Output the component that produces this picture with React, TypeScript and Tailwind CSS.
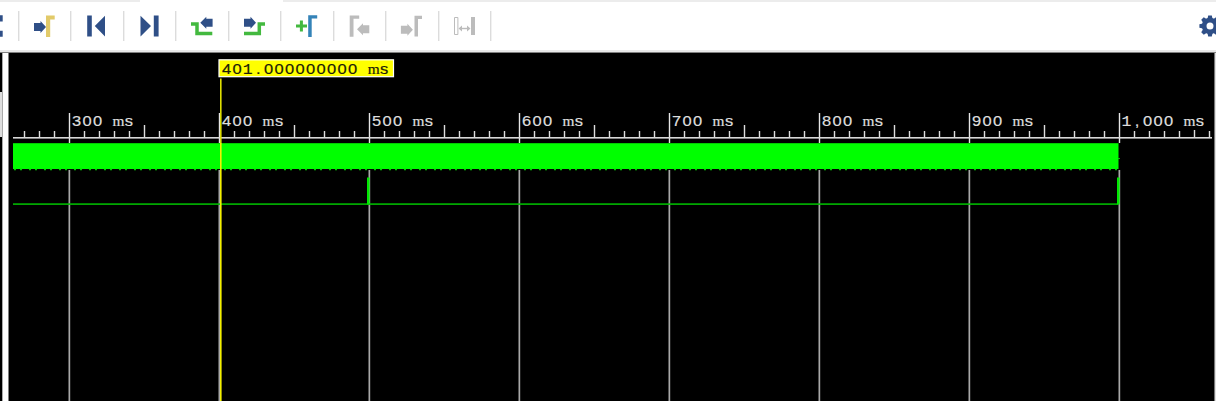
import type { ReactNode } from "react";

const NAVY = "#2f4f87";
const GREEN = "#43b93f";
const GRAY = "#bcbcbc";

const arrowRight = (x: number, y: number) =>
  `M${x} ${y - 4}h6.5v-2l5.5 6l-5.5 6v-2h-6.5z`;
const arrowLeft = (x: number, y: number) =>
  `M${x + 12.3} ${y - 4}h-6.3v-2l-6 6l6 6v-2h6.3z`;

const tools: { name: string; icon: ReactNode }[] = [
  {
    name: "Go to cursor",
    icon: (
      <>
        <path d={arrowRight(16, 27)} fill={NAVY} />
        <path d="M28 15.5h8.7v4h-4.5V37H28z" fill="#e2ca69" />
      </>
    ),
  },
  {
    name: "Go to start",
    icon: <path d="M17.2 15.5h4.6v21h-4.6zM35 15.8v20.7L24.8 26z" fill={NAVY} />,
  },
  {
    name: "Go to end",
    icon: <path d="M17.5 15.8v20.7L28 26zM30.8 15.5h4.8v21h-4.8z" fill={NAVY} />,
  },
  {
    name: "Previous transition",
    icon: (
      <>
        <path d="M16 24h6v9.5h15.3" fill="none" stroke={GREEN} strokeWidth="3.5" />
        <path d={arrowLeft(25.3, 22.7)} fill={NAVY} />
      </>
    ),
  },
  {
    name: "Next transition",
    icon: (
      <>
        <path d="M16 33.5h15.3V24H37" fill="none" stroke={GREEN} strokeWidth="3.5" />
        <path d={arrowRight(16, 22.7)} fill={NAVY} />
      </>
    ),
  },
  {
    name: "Add marker",
    icon: (
      <>
        <path d="M16 26h11M21.4 20.5v11" stroke={GREEN} strokeWidth="3" />
        <path d="M28.2 15.3h9v3.3h-5.5V37h-3.5z" fill="#3483b8" />
      </>
    ),
  },
  {
    name: "Previous marker",
    icon: (
      <>
        <path d="M16.7 15.5h9.5v3.2H20.5V36.8h-3.8z" fill={GRAY} />
        <path d={arrowLeft(24, 29.3)} fill={GRAY} />
      </>
    ),
  },
  {
    name: "Next marker",
    icon: (
      <>
        <path d={arrowRight(15.9, 29.7)} fill={GRAY} />
        <path d="M29.5 15.8h7.5V19H33v17.5h-3.5z" fill={GRAY} />
      </>
    ),
  },
  {
    name: "Swap cursors",
    icon: (
      <>
        <path d="M16.5 17.5h3.4v17h-3.4z" fill="none" stroke={GRAY} />
        <path d="M33 17h4v18h-4z" fill={GRAY} />
        <path d="M22 28.5h9" stroke={GRAY} strokeWidth="1.4" />
        <path d="M20.5 28.5l3.5-3v6zM32.5 28.5l-3.5-3v6z" fill={GRAY} />
      </>
    ),
  },
];

function Toolbar() {
  return (
    <header className="flex h-[50px] w-full shrink-0 overflow-hidden bg-white">
      <svg className="h-[50px] w-[17.5px] shrink-0" viewBox="0 0 17.5 50">
        <path d="M0 15.2h2.7v6.3H0zM0 30.7h2.7v6H0z" fill={NAVY} />
      </svg>
      {tools.map((t) => (
        <button key={t.name} className="h-[50px] w-[52.5px] shrink-0">
          <svg className="h-[50px] w-[52.5px]" viewBox="0 0 52.5 50">
            <path d="M0.7 11v30" stroke="#dcdcdc" strokeWidth="1.4" />
            {t.icon}
          </svg>
        </button>
      ))}
      <svg className="h-[50px] w-[10px] shrink-0" viewBox="0 0 10 50">
        <path d="M0.7 11v30" stroke="#dcdcdc" strokeWidth="1.4" />
      </svg>
      <button className="ml-auto h-[50px] w-[18px] shrink-0">
        <svg className="h-[50px] w-[18px]" viewBox="0 0 18 50">
          <g fill={NAVY} transform="translate(12 26)">
            {[0, 45, 90, 135, 180, 225, 270, 315].map((a) => (
              <path key={a} d="M-2.6 -7L-1.8 -10.6H1.8L2.6 -7z" transform={`rotate(${a})`} />
            ))}
            <path
              fillRule="evenodd"
              d="M0 -8.2a8.2 8.2 0 1 0 0 16.4a8.2 8.2 0 1 0 0 -16.4zM0 -3.5a3.5 3.5 0 1 1 0 7a3.5 3.5 0 1 1 0 -7z"
            />
          </g>
        </svg>
      </button>
    </header>
  );
}

function glyphFont(c: string) {
  if (c === "m") return '"Liberation Serif", serif';
  if (c === "1") return '"Liberation Mono", monospace';
  return '"Liberation Sans", sans-serif';
}

const STRETCH = 1.13;

/* Terminal-style text: every character is centred in a cell of fixed width. */
function CellText({ x, y, fill, children }: { x: number; y: number; fill: string; children: string }) {
  return (
    <text
      y={y}
      fill={fill}
      stroke={fill}
      strokeWidth="0.2"
      fontSize="14.6"
      textAnchor="middle"
      transform={`scale(${STRETCH} 1)`}
    >
      {children.split("").map((c, i) => (
        <tspan
          key={i}
          x={(x + i * 10.5) / STRETCH}
          fontFamily={glyphFont(c)}
          fontSize={c === "m" ? 13.6 : 14.6}
        >
          {c}
        </tspan>
      ))}
    </text>
  );
}

const majors = ["300 ms", "400 ms", "500 ms", "600 ms", "700 ms", "800 ms", "900 ms", "1,000 ms"];
const ticks = Array.from({ length: 80 }, (_, i) => i).filter((i) => i % 10 !== 3);

/* The drawing's origin is the panel's top left corner, at (9, 53) in the window. */
function Waveform() {
  return (
    <svg className="block h-[348px] w-[1205px] shrink-0 bg-black" viewBox="9 53 1205 348">
      {majors.map((label, i) => {
        const x = 69 + i * 150;
        return (
          <g key={label}>
            <rect x={x - 0.2} y="113" width="1.4" height="30" fill="#e6e6e6" />
            <rect x={x - 0.5} y="170" width="1.7" height="231" fill="#a8a8a8" />
            <CellText x={x + 7.5} y={126.2} fill="#dedede">
              {label}
            </CellText>
          </g>
        );
      })}
      {ticks.map((i) => {
        const x = 24 + i * 15;
        const mid = i % 10 === 8;
        const top = mid ? (x > 1190 ? 130 : 125) : 131;
        return <rect key={i} x={x - 0.2} y={top} width="1.4" height={138 - top} fill="#dedede" />;
      })}
      <rect x="13" y="137" width="1199" height="1.6" fill="#d8d8d8" />

      <rect x="13" y="143.2" width="1105.5" height="25.8" fill="#00ff00" />
      <path d="M14 169.5H1118" stroke="#00d000" strokeWidth="1.4" strokeDasharray="2 4 2 7" />
      <rect x="1118" y="158" width="2" height="1" fill="#00c800" />

      <rect x="13" y="203.3" width="1105" height="1.6" fill="#00b800" />
      <rect x="367" y="177.5" width="2.6" height="27" fill="#00e800" />
      <rect x="1117" y="177.5" width="2.6" height="27" fill="#00e800" />

      <rect x="220" y="78.5" width="1.6" height="65" fill="#dede00" />
      <rect x="220" y="143" width="1.6" height="258" fill="#f4f000" />
      <rect x="219" y="59.8" width="174.5" height="16.9" fill="#ffff00" stroke="#ffffff" strokeWidth="1.2" />
      <CellText x={226.7} y={73.8} fill="#1c1c08">
        401.000000000 ms
      </CellText>
    </svg>
  );
}

export default function App() {
  return (
    <div className="relative flex h-[401px] w-[1216px] flex-col overflow-hidden bg-white">
      <div className="absolute inset-x-0 top-0 flex h-[2px] justify-between">
        <div className="w-[140px] bg-[#ececec]" />
        <div className="w-[933px] bg-[#ececec]" />
      </div>
      <Toolbar />
      <div className="h-[2px] shrink-0 bg-[#e8e8e8]" />
      <div className="h-px shrink-0 bg-[#808080]" />
      <main className="flex h-[348px]">
        <div className="flex w-[2px] shrink-0 flex-col bg-black">
          <div className="mt-[39px] h-[45px] bg-[#dedede]" />
        </div>
        <div className="w-px shrink-0 bg-[#aaaaaa]" />
        <div className="w-[5px] shrink-0 bg-white" />
        <div className="w-px shrink-0 bg-[#808080]" />
        <Waveform />
        <div className="w-px shrink-0 bg-[#777777]" />
        <div className="w-px shrink-0 bg-[#e0e0e0]" />
      </main>
    </div>
  );
}
